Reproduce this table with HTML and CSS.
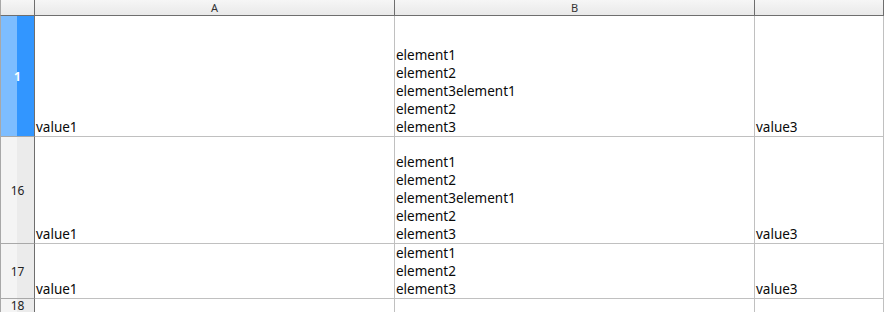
FILE: index.html
```html
<!DOCTYPE html>
<html>
<head>
    <link rel="stylesheet" href="styles.css">
</head>
<body>
    <div class="sheet">
        <!-- column headers -->
        <div class="corner"></div>
        <div class="col-head">A</div>
        <div class="col-head">B</div>
        <div class="col-head"></div>

        <!-- row 1 (selected) -->
        <div class="row-head selected">1</div>
        <div class="cell">value1</div>
        <div class="cell">element1<br>element2<br>element3element1<br>element2<br>element3</div>
        <div class="cell">value3</div>

        <!-- row 16 -->
        <div class="row-head">16</div>
        <div class="cell">value1</div>
        <div class="cell">element1<br>element2<br>element3element1<br>element2<br>element3</div>
        <div class="cell">value3</div>

        <!-- row 17 -->
        <div class="row-head">17</div>
        <div class="cell">value1</div>
        <div class="cell">element1<br>element2<br>element3</div>
        <div class="cell">value3</div>

        <!-- row 18, runs past the bottom of the view -->
        <div class="row-head open">18</div>
        <div class="cell open"></div>
        <div class="cell open"></div>
        <div class="cell open"></div>
    </div>
</body>
</html>
```

FILE: styles.css
```css
html, body {
    margin: 0;
    padding: 0;
    background-color: white;
    overflow: hidden;
}
.sheet {
    display: grid;
    grid-template-columns: 35px 360px 360px 1fr;
    grid-template-rows: 16px 121px 107px 55px 13px;
    font-family: 'Noto Sans', sans-serif;
    font-size: 13.5px;
    color: #0a0a0a;
    width: 884px;
    height: 312px;
    overflow: hidden;
}
.corner, .col-head {
    background: linear-gradient(#f6f6f6, #e9e9e9);
    border-right: 1px solid #6e6e6e;
    border-bottom: 1px solid #6e6e6e;
}
.corner {
    border-left: 1px solid #a8a8a8;
}
.col-head {
    font-size: 11px;
    color: #333;
    text-align: center;
    line-height: 15px;
}
.row-head {
    border-left: 1px solid #a8a8a8;
    border-right: 1px solid #6e6e6e;
    border-bottom: 1px solid #a8a8a8;
    background: linear-gradient(to right, #f4f4f4 50%, #ebebeb 50%);
    color: #222;
    font-size: 12px;
    display: flex;
    align-items: center;
    justify-content: center;
}
.row-head.selected {
    background: linear-gradient(to right, #7dbdff 50%, #3296ff 50%);
    color: white;
    font-weight: bold;
}
.cell {
    border-right: 1px solid #c0c0c0;
    border-bottom: 1px solid #c0c0c0;
    line-height: 18px;
    padding-left: 1px;
    display: flex;
    flex-direction: column;
    justify-content: flex-end;
    white-space: nowrap;
    overflow: hidden;
}
.open {
    border-bottom: none;
}
.row-head.open {
    line-height: 13px;
}
```
